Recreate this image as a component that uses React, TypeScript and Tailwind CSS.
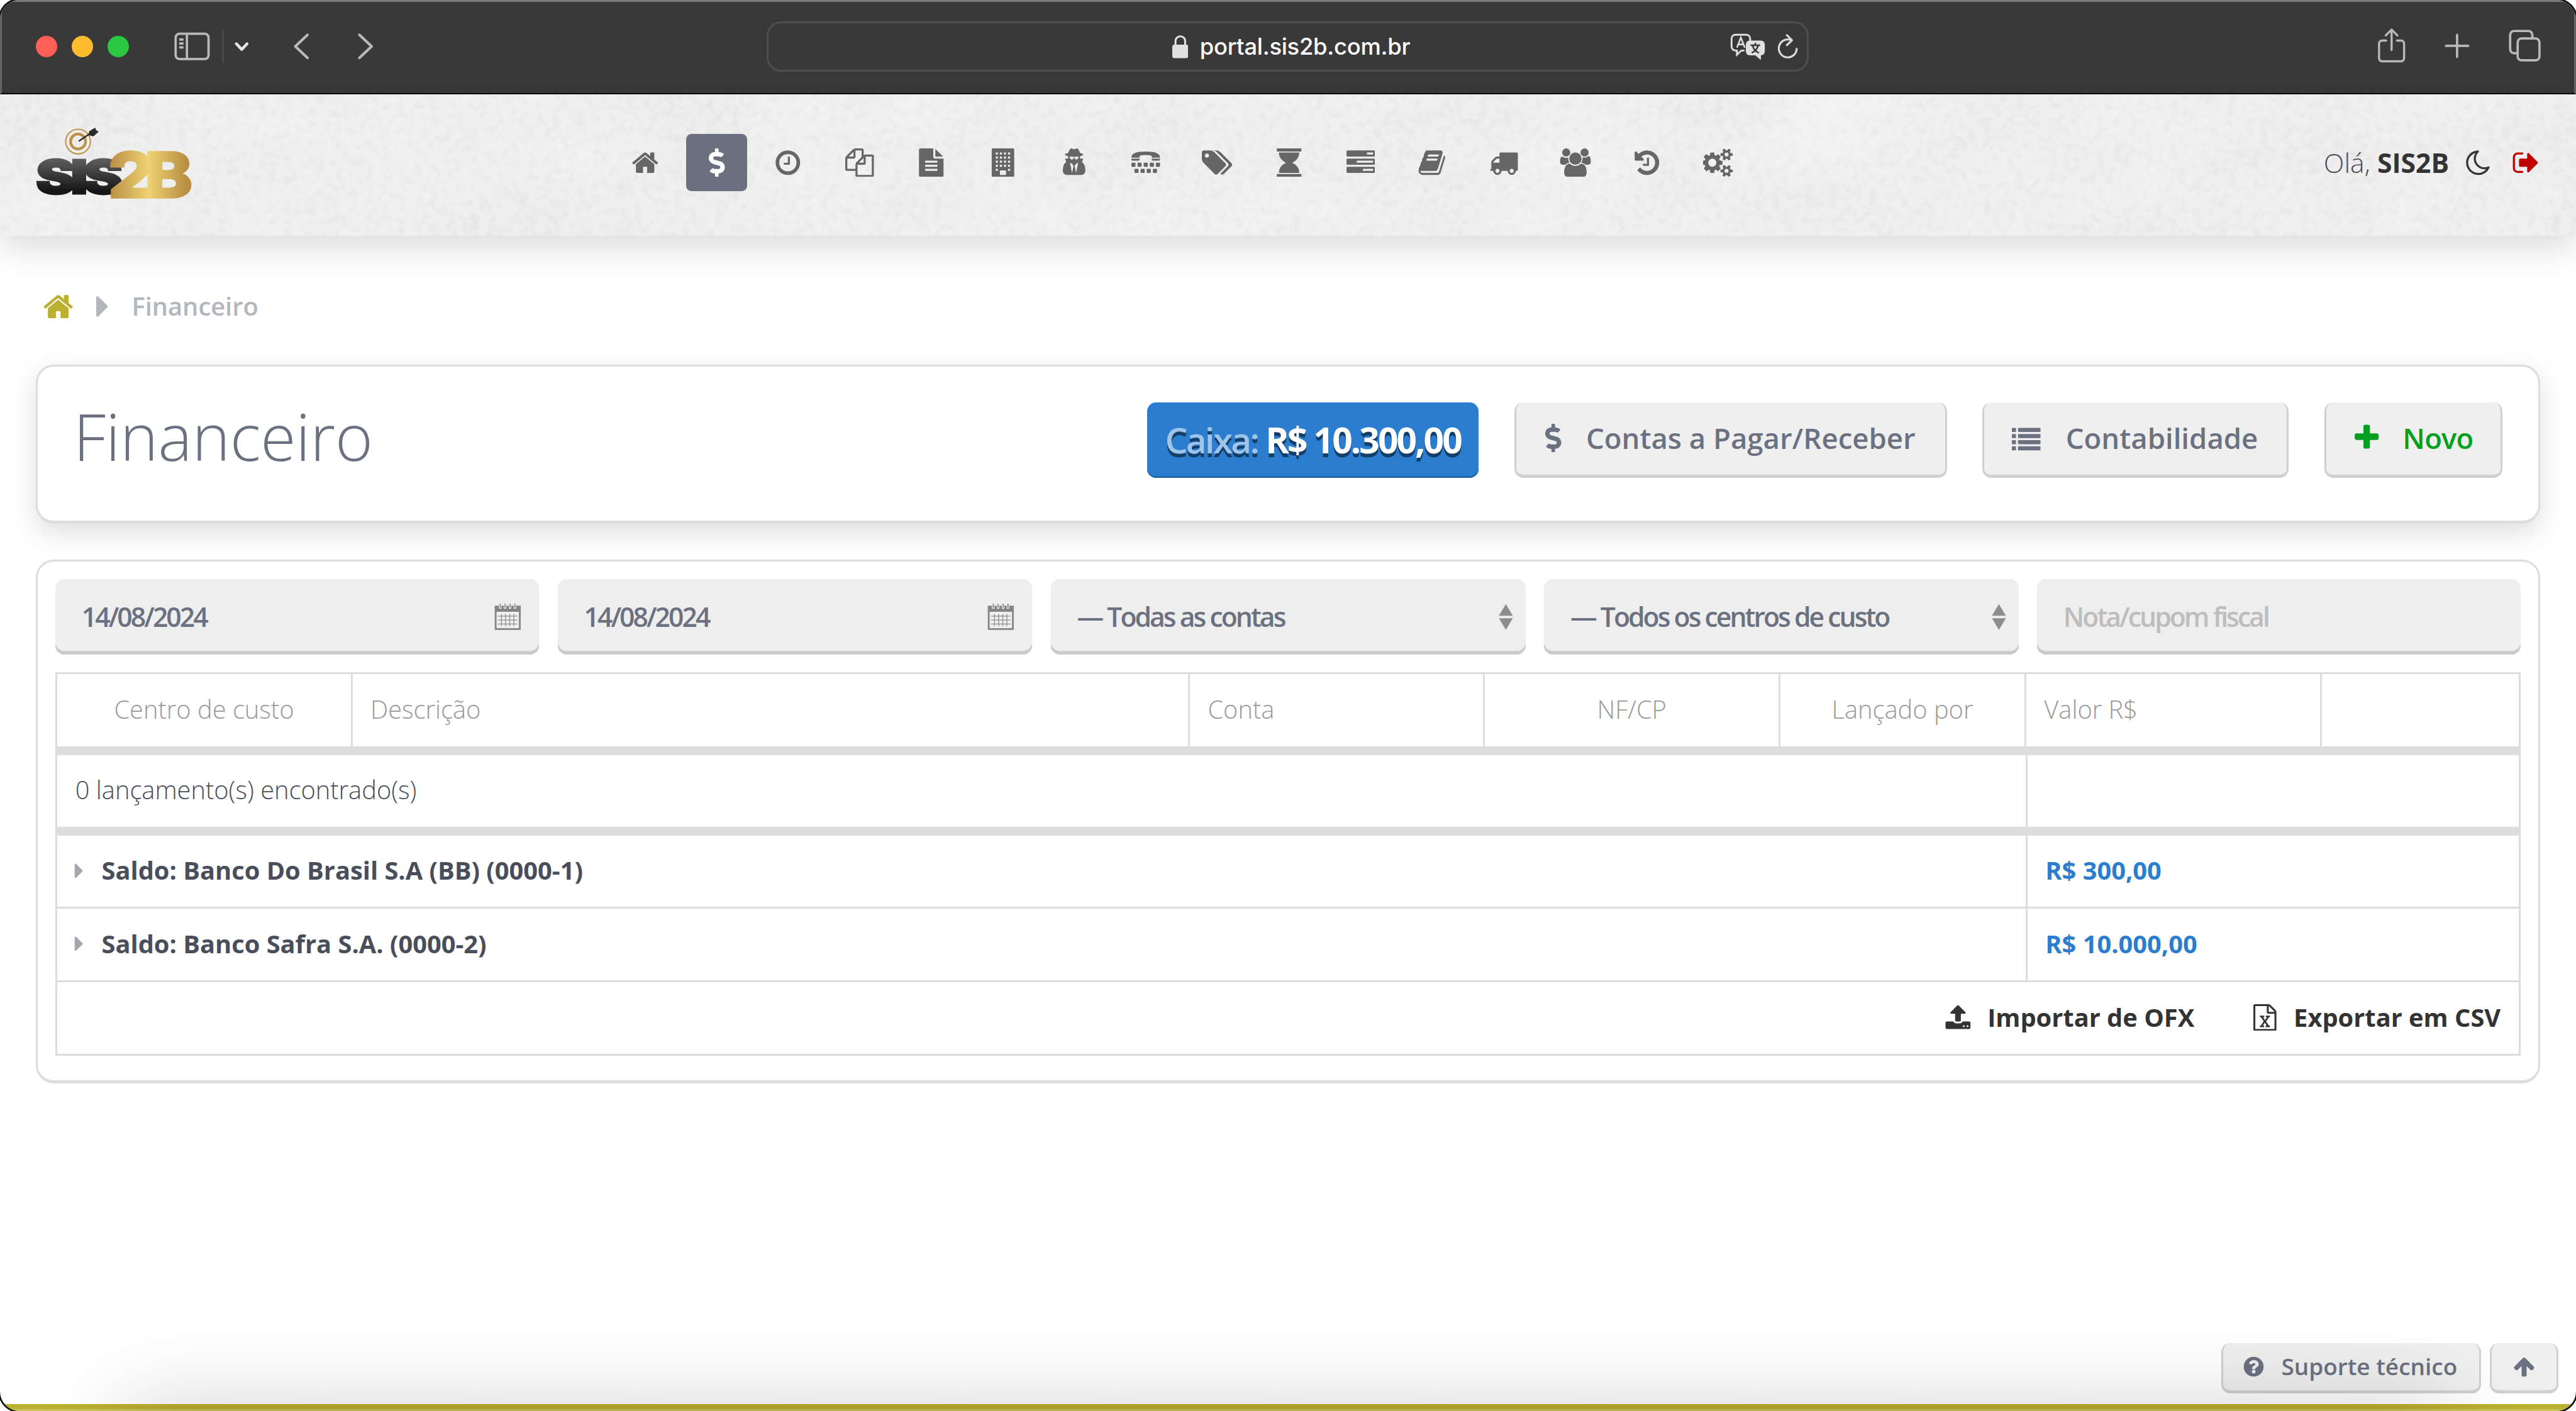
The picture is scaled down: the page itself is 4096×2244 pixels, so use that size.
import { useState, type ReactNode } from "react";
import { FaDollarSign } from "react-icons/fa";
import clsx from "clsx";

type GlyphProps = {
  d: string;
  width?: number;
  className?: string;
};

// Icon glyphs share a 1792-unit em box, only the width varies.
function Glyph({ d, width = 1792, className }: GlyphProps) {
  return (
    <svg
      viewBox={`0 0 ${width} 1792`}
      className={clsx("shrink-0", className)}
      fill="currentColor"
      fillRule="evenodd"
      aria-hidden="true"
      style={{ height: "1em", width: `${width / 1792}em` }}
    >
      <path d={d} />
    </svg>
  );
}

const glyphs = {
  home: "M1472 992v480q0 26-19 45t-45 19h-384v-384h-256v384h-384q-26 0-45-19t-19-45v-480q0-1 .5-3t.5-3l575-474 575 474q1 2 1 6zm223-69l-62 74q-8 9-21 11h-3q-13 0-21-7l-692-577-692 577q-12 8-24 7-13-2-21-11l-62-74q-8-10-7-23.5t11-21.5l719-599q32-26 76-26t76 26l244 204v-195q0-14 9-23t23-9h192q14 0 23 9t9 23v408l219 182q10 8 11 21.5t-7 23.5z",
  clock:
    "M1024 544v448q0 14-9 23t-23 9h-320q-14 0-23-9t-9-23v-64q0-14 9-23t23-9h224v-352q0-14 9-23t23-9h64q14 0 23 9t9 23zm416 352q0-148-73-273t-198-198-273-73-273 73-198 198-73 273 73 273 198 198 273 73 273-73 198-198 73-273zm224 0q0 209-103 385.5t-279.5 279.5-385.5 103-385.5-103-279.5-279.5-103-385.5 103-385.5 279.5-279.5 385.5-103 385.5 103 279.5 279.5 103 385.5z",
  files:
    "M1696 384q40 0 68 28t28 68v1216q0 40-28 68t-68 28h-960q-40 0-68-28t-28-68v-288h-544q-40 0-68-28t-28-68v-672q0-40 20-88t48-76l408-408q28-28 76-48t88-20h416q40 0 68 28t28 68v328q68-40 128-40h416zm-544 213l-299 299h299v-299zm-640-384l-299 299h299v-299zm196 647l316-316v-416h-384v416q0 40-28 68t-68 28h-416v640h512v-256q0-40 20-88t48-76zm956 804v-1152h-384v416q0 40-28 68t-68 28h-416v640h896z",
  fileText:
    "M1596 476q14 14 28 36h-472v-472q22 14 36 28zm-476 164h544v1056q0 40-28 68t-68 28h-1344q-40 0-68-28t-28-68v-1600q0-40 28-68t68-28h800v544q0 40 28 68t68 28zm160 736v-64q0-14-9-23t-23-9h-704q-14 0-23 9t-9 23v64q0 14 9 23t23 9h704q14 0 23-9t9-23zm0-256v-64q0-14-9-23t-23-9h-704q-14 0-23 9t-9 23v64q0 14 9 23t23 9h704q14 0 23-9t9-23zm0-256v-64q0-14-9-23t-23-9h-704q-14 0-23 9t-9 23v64q0 14 9 23t23 9h704q14 0 23-9t9-23z",
  building:
    "M256 0h1280q64 0 64 64v1664q0 64-64 64h-1280q-64 0-64-64v-1664q0-64 64-64zM448 256v128h128v-128zm256 0v128h128v-128zm256 0v128h128v-128zm256 0v128h128v-128zM448 512v128h128v-128zm256 0v128h128v-128zm256 0v128h128v-128zm256 0v128h128v-128zM448 768v128h128v-128zm256 0v128h128v-128zm256 0v128h128v-128zm256 0v128h128v-128zM448 1024v128h128v-128zm256 0v128h128v-128zm256 0v128h128v-128zm256 0v128h128v-128zM448 1280v128h128v-128zm768 0v128h128v-128zM736 1376q-32 0-32 32v256h384v-256q0-32-32-32z",
  userSecret:
    "M576 1536l96-448-96-128-128-64zm256 0l128-640-128 64-96 128zm160-1010q-2-4-4-6-10-8-96-8-70 0-167 19-7 2-21 2t-21-2q-97-19-167-19-86 0-96 8-2 2-4 6 2 18 4 27 2 3 7.5 6.5t7.5 10.5q2 4 7.5 20.5t7 20.5 7.5 17 8.5 17 9 14 12 13.5 14 9.5 17.500 8 20.500 4 24.500 2q36 0 59-12.500t32.500-30 14.500-34.500 11.500-29.500 17.500-12.500h12q11 0 17.500 12.500t11.500 29.500 14.500 34.500 32.500 30 59 12.500q13 0 24.500-2t20.500-4 17.500-8 14-9.500 12-13.500 9-14 8.500-17 7.500-17 7-20.500 7.500-20.500q2-7 7.500-10.500t7.500-6.500q2-9 4-27zm416 879q0 121-73 190t-194 69h-874q-121 0-194-69t-73-190q0-61 4.500-118t19-125.500 37.500-123.500 63.500-103.500 93.500-74.500l-90-220h214q-22-64-22-128 0-12 2-32-194-40-194-96 0-57 210-99 17-62 51.500-134t70.500-114q32-37 76-37 30 0 84 31t84 31 84-31 84-31q44 0 76 37 36 42 70.500 114t51.500 134q210 42 210 99 0 56-194 96 7 81-20 160h214l-82 225q63 33 107.500 96.500t65.500 143.500 29 151.500 8 148.500z",
  tty: "M0 544q0-140 220-256 220-96 676-96t676 96q220 116 220 256v32h-512v-64q0-60-70-70-130-26-314-26t-314 26q-70 10-70 70v64h-512zM0 640h512v70q0 58-58 58h-396q-58 0-58-58zm1280 0h512v70q0 58-58 58h-396q-58 0-58-58zM40 896h176q40 0 40 40v176q0 40-40 40h-176q-40 0-40-40v-176q0-40 40-40zm384 0h176q40 0 40 40v176q0 40-40 40h-176q-40 0-40-40v-176q0-40 40-40zm384 0h176q40 0 40 40v176q0 40-40 40h-176q-40 0-40-40v-176q0-40 40-40zm384 0h176q40 0 40 40v176q0 40-40 40h-176q-40 0-40-40v-176q0-40 40-40zm384 0h176q40 0 40 40v176q0 40-40 40h-176q-40 0-40-40v-176q0-40 40-40zM232 1280h176q40 0 40 40v176q0 40-40 40h-176q-40 0-40-40v-176q0-40 40-40zm384 0h176q40 0 40 40v176q0 40-40 40h-176q-40 0-40-40v-176q0-40 40-40zm384 0h176q40 0 40 40v176q0 40-40 40h-176q-40 0-40-40v-176q0-40 40-40zm384 0h176q40 0 40 40v176q0 40-40 40h-176q-40 0-40-40v-176q0-40 40-40z",
  tags: "M448 448q0-53-37.5-90.5t-90.5-37.5-90.5 37.5-37.5 90.5 37.5 90.5 90.5 37.5 90.5-37.5 37.5-90.5zm1067 576q0 53-37 90l-491 492q-39 37-91 37-53 0-90-37l-715-716q-38-37-64.5-101t-26.5-117v-416q0-52 38-90t90-38h416q53 0 117 26.5t102 64.5l715 714q37 39 37 91zm384 0q0 53-37 90l-491 492q-39 37-91 37-36 0-59-14t-53-45l470-470q37-37 37-90 0-52-37-91l-715-714q-38-38-102-64.5t-117-26.5h224q53 0 117 26.5t102 64.5l715 714q37 39 37 91z",
  hourglass:
    "M160 0h1472q32 0 32 32v160h-1536v-160q0-32 32-32zM256 256h1280q0 420-440 640 440 220 440 640h-1280q0-420 440-640-440-220-440-640zM128 1600h1536v160q0 32-32 32h-1472q-32 0-32-32z",
  tasks:
    "M1024 1408h640v-128h-640v128zm-384-512h1024v-128h-1024v128zm640-512h384v-128h-384v128zm512 832v256q0 26-19 45t-45 19h-1664q-26 0-45-19t-19-45v-256q0-26 19-45t45-19h1664q26 0 45 19t19 45zm0-512v256q0 26-19 45t-45 19h-1664q-26 0-45-19t-19-45v-256q0-26 19-45t45-19h1664q26 0 45 19t19 45zm0-512v256q0 26-19 45t-45 19h-1664q-26 0-45-19t-19-45v-256q0-26 19-45t45-19h1664q26 0 45 19t19 45z",
  book: "M1703 478q40 57 18 129l-275 906q-19 64-76.5 107.5t-122.5 43.5h-923q-77 0-148.5-53.5t-99.5-131.5q-24-67-2-127 0-4 3-27t4-37q1-8-3-21.5t-3-19.5q2-11 8-21t16.5-23.5 16.5-23.5q23-38 45-91.5t30-91.5q3-10 .5-30t-.5-28q3-11 17-28t17-23q21-36 42-92t25-90q1-9-2.5-32t.5-28q4-13 22-30.5t22-22.5q19-26 42.5-84.5t27.5-96.5q1-8-3-25.5t-2-26.5q2-8 9-18t18-23 17-21q8-12 16.5-30.5t15-35 16-36 19.5-32 26.5-23.5 36-11.5 47.5 5.5l-1 3q38-9 51-9h761q74 0 114 56t18 130l-274 906q-36 119-71.5 153.5t-128.5 34.5h-869q-27 0-38 15-11 16-1 43 24 70 144 70h923q29 0 56-15.5t35-41.5l300-987q7-22 5-57 38 15 59 43zm-1064 2q-4 13 2 22.5t20 9.5h608q13 0 25.5-9.5t16.5-22.5l21-64q4-13-2-22.5t-20-9.5h-608q-13 0-25.5 9.5t-16.5 22.5zm-83 256q-4 13 2 22.5t20 9.5h608q13 0 25.5-9.5t16.5-22.5l21-64q4-13-2-22.5t-20-9.5h-608q-13 0-25.5 9.5t-16.5 22.5z",
  truck:
    "M640 1408q0-52-38-90t-90-38-90 38-38 90 38 90 90 38 90-38 38-90zm-384-512h384v-256h-158q-13 0-22 9l-195 195q-9 9-9 22v30zm1280 512q0-52-38-90t-90-38-90 38-38 90 38 90 90 38 90-38 38-90zm256-1088v1024q0 15-4 26.5t-13.5 18.5-16.5 11.5-23.5 6-22.5 2-25.5 0-22.5-.5q0 106-75 181t-181 75-181-75-75-181h-384q0 106-75 181t-181 75-181-75-75-181h-64q-3 0-22.5.5t-25.5 0-22.5-2-23.5-6-16.5-11.5-13.5-18.5-4-26.5q0-26 19-45t45-19v-320q0-8-.5-35t0-38 2.5-34.5 6.5-37 14-30.5 22.5-30l198-198q19-19 50.5-32t58.5-13h160v-192q0-26 19-45t45-19h1024q26 0 45 19t19 45z",
  users:
    "M657 896q-162 5-265 128h-134q-82 0-138-40.5t-56-118.5q0-353 124-353 6 0 43.5 21t97.5 42.5 119 21.5q67 0 133-23-5 37-5 66 0 159 81 282zm1071 637q0 120-73 189.5t-194 69.5h-874q-121 0-194-69.5t-73-189.5q0-53 3.5-103.5t14-109 26.5-108.5 43-97.5 62-81 85.5-53.5 111.5-20q10 0 43 21.5t73 48 107 48 135 21.5 135-21.5 107-48 73-48 43-21.5q61 0 111.5 20t85.5 53.5 62 81 43 97.5 26.5 108.5 14 109 3.5 103.5zm-1024-1277q0 106-75 181t-181 75-181-75-75-181 75-181 181-75 181 75 75 181zm704 384q0 159-112.5 271.5t-271.5 112.5-271.5-112.5-112.5-271.5 112.5-271.5 271.5-112.5 271.5 112.5 112.5 271.5zm576 225q0 78-56 118.5t-138 40.5h-134q-103-123-265-128 81-123 81-282 0-29-5-66 66 23 133 23 59 0 119-21.5t97.5-42.5 43.5-21q124 0 124 353zm-128-609q0 106-75 181t-181 75-181-75-75-181 75-181 181-75 181 75 75 181z",
  history:
    "M1664 896q0 156-61 298t-164 245-245 164-298 61q-172 0-327-72.5t-264-204.5q-7-10-6.5-22.5t8.5-20.5l137-138q10-9 25-9 16 2 23 12 73 95 179 147t225 52q104 0 198.5-40.5t163.5-109.5 109.5-163.5 40.5-198.5-40.5-198.5-109.5-163.5-163.5-109.5-198.5-40.5q-98 0-188 35.5t-160 101.5l137 138q31 30 14 69-17 40-59 40h-448q-26 0-45-19t-19-45v-448q0-42 40-59 39-17 69 14l130 129q107-101 244.5-156.5t284.5-55.5q156 0 298 61t245 164 164 245 61 298zm-640-288v448q0 14-9 23t-23 9h-320q-14 0-23-9t-9-23v-64q0-14 9-23t23-9h224v-352q0-14 9-23t23-9h64q14 0 23 9t9 23z",
  cogs: "M832 896q0-106-75-181t-181-75-181 75-75 181 75 181 181 75 181-75 75-181zm768 512q0-52-38-90t-90-38-90 38-38 90q0 53 37.5 90.5t90.5 37.5 90.5-37.5 37.5-90.5zm0-1024q0-52-38-90t-90-38-90 38-38 90q0 53 37.5 90.5t90.5 37.5 90.5-37.5 37.5-90.5zm-384 421v185q0 10-7 19.5t-16 10.5l-155 24q-11 35-32 76 34 48 90 115 7 11 7 20 0 12-7 19-23 30-82.5 89.5t-78.5 59.5q-11 0-21-7l-115-90q-37 19-77 31-11 108-23 155-7 24-30 24h-186q-11 0-20-7.5t-10-17.5l-23-153q-34-10-75-31l-118 89q-7 7-20 7-11 0-21-8-144-133-144-160 0-9 7-19 10-14 41-53t47-61q-23-44-35-82l-152-24q-10-1-17-9.5t-7-19.5v-185q0-10 7-19.5t16-10.5l155-24q11-35 32-76-34-48-90-115-7-11-7-20 0-12 7-20 22-30 82-89t79-59q11 0 21 7l115 90q34-18 77-32 11-108 23-154 7-24 30-24h186q11 0 20 7.5t10 17.5l23 153q34 10 75 31l118-89q8-7 20-7 11 0 21 8 144 133 144 160 0 8-7 19-12 16-42 54t-45 60q23 48 34 82l152 23q10 2 17 10.5t7 19.5zm640 533v140q0 16-149 31-12 27-30 52 51 113 51 138 0 4-4 7-122 71-124 71-8 0-46-47t-52-68q-20 2-30 2t-30-2q-14 21-52 68t-46 47q-2 0-124-71-4-3-4-7 0-25 51-138-18-25-30-52-149-15-149-31v-140q0-16 149-31 13-29 30-52-51-113-51-138 0-4 4-7 4-2 35-20t59-34 30-16q8 0 46 46.5t52 67.5q20-2 30-2t30 2q51-71 92-112l6-2q4 0 124 70 4 3 4 7 0 25-51 138 17 23 30 52 149 15 149 31zm0-1024v140q0 16-149 31-12 27-30 52 51 113 51 138 0 4-4 7-122 71-124 71-8 0-46-47t-52-68q-20 2-30 2t-30-2q-14 21-52 68t-46 47q-2 0-124-71-4-3-4-7 0-25 51-138-18-25-30-52-149-15-149-31v-140q0-16 149-31 13-29 30-52-51-113-51-138 0-4 4-7 4-2 35-20t59-34 30-16q8 0 46 46.5t52 67.5q20-2 30-2t30 2q51-71 92-112l6-2q4 0 124 70 4 3 4 7 0 25-51 138 17 23 30 52 149 15 149 31z",
  moon: "M1390 1303q-54 9-110 9-182 0-337-90t-245-245-90-337q0-192 104-357-201 60-328.5 229t-127.5 384q0 130 51 248.5t136.5 204 204 136.5 248.5 51q144 0 273.5-61.5t220.5-171.5zm203-85q-94 203-283.5 324.5t-413.5 121.5q-156 0-298-61t-245-164-164-245-61-298q0-153 57.5-292.5t156-241.5 235.5-164.5 290-68.5q44-2 61 39 18 41-15 72-86 78-131.5 181.5t-45.5 218.5q0 148 73 273t198 198 273 73q118 0 228-51 41-18 72 13 14 14 17.5 34t-4.5 38z",
  signOut:
    "M704 1440q0 4 1 20t.5 26.5-3 23.5-10 19.5-20.5 6.5h-320q-119 0-203.5-84.5t-84.5-203.5v-704q0-119 84.5-203.5t203.5-84.5h320q13 0 22.5 9.5t9.5 22.5q0 4 1 20t.5 26.5-3 23.5-10 19.5-20.5 6.5h-320q-66 0-113 47t-47 113v704q0 66 47 113t113 47h312l11.5 1 11.5 3 8 5.5 7 9 2 13.5zm928-544q0 26-19 45l-544 544q-19 19-45 19t-45-19-19-45v-288h-448q-26 0-45-19t-19-45v-384q0-26 19-45t45-19h448v-288q0-26 19-45t45-19 45 19l544 544q19 19 19 45z",
  list: "M32 256h192q32 0 32 32v192q0 32-32 32h-192q-32 0-32-32v-192q0-32 32-32zm0 384h192q32 0 32 32v192q0 32-32 32h-192q-32 0-32-32v-192q0-32 32-32zm0 384h192q32 0 32 32v192q0 32-32 32h-192q-32 0-32-32v-192q0-32 32-32zm0 384h192q32 0 32 32v192q0 32-32 32h-192q-32 0-32-32v-192q0-32 32-32zM416 256h1344q32 0 32 32v192q0 32-32 32h-1344q-32 0-32-32v-192q0-32 32-32zm0 384h1344q32 0 32 32v192q0 32-32 32h-1344q-32 0-32-32v-192q0-32 32-32zm0 384h1344q32 0 32 32v192q0 32-32 32h-1344q-32 0-32-32v-192q0-32 32-32zm0 384h1344q32 0 32 32v192q0 32-32 32h-1344q-32 0-32-32v-192q0-32 32-32z",
  plus: "M1600 736v192q0 40-28 68t-68 28h-416v416q0 40-28 68t-68 28h-192q-40 0-68-28t-28-68v-416h-416q-40 0-68-28t-28-68v-192q0-40 28-68t68-28h416v-416q0-40 28-68t68-28h192q40 0 68 28t28 68v416h416q40 0 68 28t28 68z",
  caret:
    "M608 896q0 26-19 45l-448 448q-19 19-45 19t-45-19-19-45v-896q0-26 19-45t45-19 45 19l448 448q19 19 19 45z",
  upload:
    "M1344 1472q0-26-19-45t-45-19-45 19-19 45 19 45 45 19 45-19 19-45zm256 0q0-26-19-45t-45-19-45 19-19 45 19 45 45 19 45-19 19-45zm128-224v320q0 40-28 68t-68 28h-1472q-40 0-68-28t-28-68v-320q0-40 28-68t68-28h427q21 56 70.5 92t110.5 36h256q61 0 110.5-36t70.5-92h427q40 0 68 28t28 68zm-325-648q-17 40-59 40h-256v448q0 26-19 45t-45 19h-256q-26 0-45-19t-19-45v-448h-256q-42 0-59-40-17-39 14-69l448-448q18-19 45-19t45 19l448 448q31 30 14 69z",
  fileExcel:
    "M1596 380q28 28 48 76t20 88v1152q0 40-28 68t-68 28h-1344q-40 0-68-28t-28-68v-1600q0-40 28-68t68-28h896q40 0 88 20t76 48zm-444-244v376h376q-10-29-22-41l-313-313q-12-12-41-22zm384 1528v-1024h-416q-40 0-68-28t-28-68v-416h-768v1536h1280zm-979-234v106h281v-106h-75l103-161q5-7 10-16.5t7.5-13.5 3.5-4h2q1 4 5 10 2 4 4.5 7.5t6 8 6.5 8.5l107 161h-76v106h291v-106h-68l-192-273 195-282h67v-107h-279v107h74l-103 159q-4 7-10 16.5t-9 13.5l-2 3h-2q-1-4-5-10-6-11-17-23l-106-159h76v-107h-290v107h68l189 272-194 283h-68z",
  question:
    "M1024 1376v-192q0-14-9-23t-23-9h-192q-14 0-23 9t-9 23v192q0 14 9 23t23 9h192q14 0 23-9t9-23zm256-672q0-88-55.5-163t-138.5-116-170-41q-243 0-371 213-15 24 8 42l132 100q7 6 19 6 16 0 25-12 53-68 86-92 34-24 86-24 48 0 85.5 26t37.5 59q0 38-20 61t-68 45q-63 28-115.5 86.5t-52.5 125.5v36q0 14 9 23t23 9h192q14 0 23-9t9-23q0-19 21.5-49.5t54.5-49.5q32-18 49-28.5t46-35 44.5-48 28-60.5 12.5-81zm384 192q0 209-103 385.5t-279.5 279.5-385.5 103-385.5-103-279.5-279.5-103-385.5 103-385.5 279.5-279.5 385.5-103 385.5 103 279.5 279.5 103 385.5z",
  arrowUp:
    "M1675 971q0 51-37 90l-75 75q-38 38-91 38-54 0-90-38l-294-293v704q0 52-37.5 84.5t-90.5 32.5h-128q-53 0-90.5-32.5t-37.5-84.5v-704l-294 293q-36 38-90 38t-90-38l-75-75q-38-38-38-90 0-53 38-91l651-651q35-37 90-37 54 0 91 37l651 651q37 39 37 91z",
};

const navItems: { key: string; icon: ReactNode }[] = [
  { key: "home", icon: <Glyph d={glyphs.home} /> },
  { key: "financeiro", icon: <FaDollarSign /> },
  { key: "horarios", icon: <Glyph d={glyphs.clock} /> },
  { key: "copias", icon: <Glyph d={glyphs.files} /> },
  { key: "documentos", icon: <Glyph d={glyphs.fileText} /> },
  { key: "empresas", icon: <Glyph d={glyphs.building} /> },
  { key: "usuarios", icon: <Glyph d={glyphs.userSecret} width={1408} /> },
  { key: "atendimento", icon: <Glyph d={glyphs.tty} /> },
  { key: "produtos", icon: <Glyph d={glyphs.tags} width={1920} /> },
  { key: "pendencias", icon: <Glyph d={glyphs.hourglass} /> },
  { key: "tarefas", icon: <Glyph d={glyphs.tasks} /> },
  { key: "cadastros", icon: <Glyph d={glyphs.book} /> },
  { key: "entregas", icon: <Glyph d={glyphs.truck} /> },
  { key: "equipes", icon: <Glyph d={glyphs.users} width={2048} /> },
  { key: "historico", icon: <Glyph d={glyphs.history} /> },
  { key: "configuracoes", icon: <Glyph d={glyphs.cogs} width={1920} /> },
];

const balances = [
  { label: "Saldo: Banco Do Brasil S.A (BB) (0000-1)", value: "R$ 300,00" },
  { label: "Saldo: Banco Safra S.A. (0000-2)", value: "R$ 10.000,00" },
];

function BrowserBar() {
  return (
    <div className="flex h-[52.6px] shrink-0 items-start border-x-[1.1px] border-t-[1.1px] border-b-[0.8px] border-x-[#666] border-t-[#7b7b7b] border-b-black bg-[#393939] font-['Inter',sans-serif] text-[#b9b9b9]">
      <div className="flex h-[50px] w-[427.6px] items-center pl-[19px]">
        <div className="flex gap-2">
          <span className="size-3 rounded-full bg-[#ff5f57]" />
          <span className="size-3 rounded-full bg-[#febc2e]" />
          <span className="size-3 rounded-full bg-[#28c840]" />
        </div>
        <svg className="ml-[25.5px] h-4 w-5" viewBox="0 0 20 16" fill="none" stroke="currentColor" strokeWidth="1.3">
          <rect x=".8" y=".9" width="18.4" height="14.2" rx="2.2" />
          <path d="M7.1 1v14M2.8 4.2h2.4M2.8 6.4h2.4M2.8 8.6h2.4" />
        </svg>
        <span className="ml-[6.5px] h-[18px] w-px bg-[#4a4a4a]" />
        <svg className="ml-[6px] h-2 w-2" viewBox="0 0 8 8" fill="none" stroke="#e6e6e6" strokeWidth="1.6" strokeLinecap="round" strokeLinejoin="round">
          <path d="M1 2.3l3 3.2 3-3.2" />
        </svg>
        <svg className="ml-[24.4px] h-4 w-[10px]" viewBox="0 0 10 16" fill="none" stroke="currentColor" strokeWidth="1.5" strokeLinecap="round" strokeLinejoin="round">
          <path d="M8.4 1.6L1.6 8l6.8 6.4" />
        </svg>
        <svg className="ml-[26px] h-4 w-[10px]" viewBox="0 0 10 16" fill="none" stroke="currentColor" strokeWidth="1.5" strokeLinecap="round" strokeLinejoin="round">
          <path d="M1.6 1.6L8.4 8l-6.8 6.4" />
        </svg>
      </div>

      <div className="mt-[11px] flex h-7 w-[582.4px] items-center rounded-lg border-[1.1px] border-[#4f4f4f] pr-[5px]">
        <div className="flex flex-1 items-center pt-[0.5px] pl-[225.5px]">
          <svg className="h-[13px] w-[9px]" viewBox="0 0 9 13" aria-hidden="true">
            <rect x="0" y="5.3" width="9" height="7.5" rx="1.2" fill="#e0e0e0" />
            <path d="M1.8 5.6V3.3a2.7 2.7 0 0 1 5.4 0v2.3" fill="none" stroke="#e0e0e0" strokeWidth="1.1" />
          </svg>
          <span className="ml-[6.5px] text-[12.8px] leading-4 font-medium tracking-[-0.1px] whitespace-nowrap text-white">
            portal.sis2b.com.br
          </span>
        </div>
        <svg className="h-[15px] w-5" viewBox="0 0 20 15" aria-hidden="true">
          <path d="M3 .8h6a2.2 2.2 0 0 1 2.2 2.2v1.2M8 9.6H6.3L3.8 12V9.6H3A2.2 2.2 0 0 1 .8 7.4V3A2.2 2.2 0 0 1 3 .8" fill="none" stroke="#e0e0e0" strokeWidth="1" />
          <rect x="8.8" y="4" width="10.6" height="8.3" rx="2.2" fill="#e0e0e0" />
          <path d="M13.8 12h3.4v3z" fill="#e0e0e0" />
          <path d="M3.8 8l2.2-5.6L8.2 8M4.5 6.2h3" fill="none" stroke="#e0e0e0" strokeWidth=".9" />
          <path d="M11.4 6.7h5.4M14.1 5.4v1.3M12.6 6.9q.8 3 3.5 4M15.6 6.9q-.8 3-3.5 4" fill="none" stroke="#393939" strokeWidth=".9" />
        </svg>
        <svg className="ml-[6px] h-[15px] w-3" viewBox="0 0 12 15" fill="none" stroke="#dcdcdc" strokeWidth="1.1" strokeLinecap="round" strokeLinejoin="round">
          <path d="M8.3 3.9A5 5 0 1 0 11.2 8.6M5.7 1l2.9 2.9-2.9 2.7" />
        </svg>
      </div>

      <div className="flex h-[50px] flex-1 items-center justify-end pr-[18.5px] pb-[1px]">
        <svg className="h-[20px] w-4" viewBox="0 0 16 20" fill="none" stroke="currentColor" strokeWidth="1.2" strokeLinecap="round" strokeLinejoin="round">
          <path d="M5 7.2H2.7A1.7 1.7 0 0 0 1 8.9v8.2a1.7 1.7 0 0 0 1.7 1.7h10.6a1.7 1.7 0 0 0 1.7-1.7V8.9a1.7 1.7 0 0 0-1.7-1.7H11M8 12.5V1.2M4.8 4.3L8 1.1l3.2 3.2" />
        </svg>
        <svg className="ml-[21.5px] h-[14px] w-[14px]" viewBox="0 0 14 14" stroke="currentColor" strokeWidth="1.3" strokeLinecap="round">
          <path d="M7 .8v12.4M.8 7h12.4" />
        </svg>
        <svg className="ml-[22px] h-[18px] w-[18px]" viewBox="0 0 18 18" fill="none" stroke="currentColor" strokeWidth="1.3">
          <rect x="5" y="5" width="12.2" height="12.2" rx="2.2" />
          <path d="M4.8 13.2H3A2.2 2.2 0 0 1 .8 11V3A2.2 2.2 0 0 1 3 .8h8A2.2 2.2 0 0 1 13.2 3v1.8" />
        </svg>
      </div>
    </div>
  );
}

function Logo() {
  return (
    <svg className="h-[56px] w-[88px] overflow-visible" viewBox="20 62 88 56" role="img" aria-label="SIS2B">
      <defs>
        <linearGradient id="logo-dark" x1="0" y1="0" x2="0" y2="1">
          <stop offset="0.2" stopColor="#5c5c5c" />
          <stop offset="0.75" stopColor="#161616" />
        </linearGradient>
        <linearGradient id="logo-gold" gradientUnits="userSpaceOnUse" x1="62" x2="106" y1="0" y2="0">
          <stop offset="0" stopColor="#bb9145" />
          <stop offset="0.48" stopColor="#eed272" />
          <stop offset="0.95" stopColor="#b98f43" />
        </linearGradient>
      </defs>
      <text x="20" y="107.4" textLength="46" lengthAdjust="spacingAndGlyphs" fill="url(#logo-dark)" stroke="url(#logo-dark)" strokeWidth="1" className="font-['Inter',sans-serif] text-[26px] font-black tracking-[-2px]">
        SIS
      </text>
      <text x="60.4" y="109.4" textLength="42" lengthAdjust="spacingAndGlyphs" fill="url(#logo-gold)" stroke="url(#logo-gold)" strokeWidth="1.2" className="font-['Inter',sans-serif] text-[35px] font-extrabold tracking-[-4.5px]">
        2B
      </text>
      <g fill="none" stroke="#bb9145">
        <circle cx="43.6" cy="78.2" r="6.9" strokeWidth=".7" />
        <circle cx="43.6" cy="78.2" r="4.2" strokeWidth="1.5" />
      </g>
      <path d="M44 78l6.5-4.4" stroke="#2b2b2b" strokeWidth=".9" />
      <path d="M49.3 74.6l.6-2.2 3.3-2 .4 1.4 1.5.9-3 2.7z" fill="#2b2b2b" />
    </svg>
  );
}

function Header() {
  return (
    <header className="relative z-10 flex h-[79.4px] shrink-0 items-center bg-[#eee] shadow-[0_6px_18px_rgba(0,0,0,0.15)]">
      {/* faint plaster texture */}
      <svg className="absolute inset-0 h-full w-full" aria-hidden="true">
        <filter id="plaster-fine" x="0" y="0" width="100%" height="100%">
          <feTurbulence type="fractalNoise" baseFrequency="0.22" numOctaves="4" seed="4" />
          <feColorMatrix values="0 0 0 0 0.45  0 0 0 0 0.45  0 0 0 0 0.45  0.9 0.5 0 0 -0.62" />
        </filter>
        <filter id="plaster-soft" x="0" y="0" width="100%" height="100%">
          <feTurbulence type="fractalNoise" baseFrequency="0.012 0.02" numOctaves="4" seed="9" />
          <feColorMatrix values="0 0 0 0 1  0 0 0 0 1  0 0 0 0 1  1.2 0.6 0 0 -0.6" />
        </filter>
        <rect width="100%" height="100%" filter="url(#plaster-fine)" opacity="0.33" />
        <rect width="100%" height="100%" filter="url(#plaster-soft)" opacity="0.4" />
      </svg>

      <div className="relative flex w-full items-center pb-[3px]">
        <div className="w-[343.6px] pl-5">
          <Logo />
        </div>
        <nav className="flex gap-[6px] text-base text-[#666]">
          {navItems.map((item) => (
            <a
              key={item.key}
              href="#"
              className={clsx(
                "flex h-8 w-[34px] items-center justify-center rounded-[3px]",
                item.key === "financeiro" && "bg-[#6b707e] text-white",
              )}
            >
              {item.icon}
            </a>
          ))}
        </nav>
        <div className="ml-auto flex items-center pr-5 text-base text-[#333]">
          <span className="text-[15px] leading-5 font-light whitespace-nowrap text-[#4a4d58]">
            Olá, <b className="font-bold text-[#333]">SIS2B</b>
          </span>
          <Glyph d={glyphs.moon} className="ml-[8.5px]" />
          <Glyph d={glyphs.signOut} className="ml-[10.5px] text-[#c00000]" />
        </div>
      </div>
    </header>
  );
}

type ActionButtonProps = {
  icon: ReactNode;
  label: string;
  className: string;
};

function ActionButton({ icon, label, className }: ActionButtonProps) {
  return (
    <button
      type="button"
      className={clsx(
        "flex h-[42.3px] shrink-0 items-center rounded-[5px] border-x-[1.1px] border-b-2 border-[#d0d0d0] bg-[#efefef] pb-[1px] text-base font-semibold whitespace-nowrap",
        className,
      )}
    >
      {icon}
      <span>{label}</span>
    </button>
  );
}

function CalendarIcon() {
  return (
    <svg className="h-[15px] w-[15px] shrink-0" viewBox="0 0 15 15" aria-hidden="true">
      <rect x=".75" y="1.7" width="13.5" height="12.5" fill="#f0f0f0" stroke="#858585" />
      <path d="M.3 1.2h14.4v3.4H.3z" fill="#858585" />
      <path d="M3.3 0v2.8M6 0v2.8M8.8 0v2.8M11.5 0v2.8" stroke="#eee" strokeWidth="1.4" />
      <path d="M3.3 0v2.4M6 0v2.4M8.8 0v2.4M11.5 0v2.4" stroke="#858585" strokeWidth=".6" />
      <path d="M2 7h11M2 9.2h11M2 11.4h11M4 5.7v6.9M6.3 5.7v6.9M8.6 5.7v6.9M10.9 5.7v6.9" stroke="#8d8d8d" strokeWidth=".45" />
    </svg>
  );
}

function SortIcon() {
  return (
    <svg className="h-[15px] w-2 shrink-0" viewBox="0 0 8 15" fill="#8d8d8d" aria-hidden="true">
      <path d="M4 .3l3.9 6.5H.1zM4 14.7L7.9 8.2H.1z" />
    </svg>
  );
}

type FieldProps = {
  children: ReactNode;
  icon?: ReactNode;
  className: string;
};

function Field({ children, icon, className }: FieldProps) {
  return (
    <div
      className={clsx(
        "flex h-[42px] items-center justify-between rounded-[5px] bg-[#eee] pl-[14.6px] text-[15px] leading-5 font-semibold tracking-[-1.04px] whitespace-nowrap shadow-[inset_0_-2px_0_#cacaca]",
        className,
      )}
    >
      <span>{children}</span>
      {icon}
    </div>
  );
}

function EntriesTable() {
  const columns = "grid-cols-[164.2fr_468.8fr_165.3fr_165.4fr_137.6fr_165.5fr_111.2fr]";
  const split = "grid-cols-[1102fr_276fr]";

  return (
    <div className="mt-[10px] border-[1.1px] border-[#ddd] text-sm font-light">
      <div className={clsx("grid h-[45.2px] border-b-[5px] border-[#ddd] text-[#999]", columns)}>
        <span className="flex items-center justify-center pb-[0.5px]">Centro de custo</span>
        <span className="flex items-center border-l-[1.1px] border-[#ddd] pb-[0.5px] pl-[10px]">Descrição</span>
        <span className="flex items-center border-l-[1.1px] border-[#ddd] pb-[0.5px] pl-[10px]">Conta</span>
        <span className="flex items-center justify-center border-l-[1.1px] border-[#ddd] pb-[0.5px]">NF/CP</span>
        <span className="flex items-center justify-center border-l-[1.1px] border-[#ddd] pb-[0.5px]">Lançado por</span>
        <span className="flex items-center border-l-[1.1px] border-[#ddd] pb-[0.5px] pl-[10px]">Valor R$</span>
        <span className="border-l-[1.1px] border-[#ddd]" />
      </div>
      <div className={clsx("grid h-[45px] border-b-[5px] border-[#ddd] text-[#4a4d58]", split)}>
        <span className="flex items-center pb-[0.5px] pl-[10px]">0 lançamento(s) encontrado(s)</span>
        <span className="border-l-[1.1px] border-[#ddd]" />
      </div>
      {balances.map((row) => (
        <div
          key={row.label}
          className={clsx("grid h-[41px] border-b-[1.1px] border-[#ddd] font-bold text-[#4a4e5a]", split)}
        >
          <span className="flex items-center pb-[0.5px] pl-[9.5px]">
            <Glyph d={glyphs.caret} width={640} className="mr-[10.2px] text-[#a5a7ae]" />
            {row.label}
          </span>
          <span className="flex items-center border-l-[1.1px] border-[#ddd] pb-[0.5px] pl-[10px] text-[#2a7dcf]">
            {row.value}
          </span>
        </div>
      ))}
      <div className="flex h-10 items-center justify-end pr-[10px] pb-[0.5px] font-bold text-[#333]">
        <Glyph d={glyphs.upload} className="mr-[9px] text-[15px]" />
        <span>Importar de OFX</span>
        <Glyph d={glyphs.fileExcel} className="mr-[8.5px] ml-[32px] text-[15px]" />
        <span>Exportar em CSV</span>
      </div>
    </div>
  );
}

export default function App() {
  const [dates] = useState({ from: "14/08/2024", to: "14/08/2024" });

  return (
    <div className="h-[2244px] w-[4096px] overflow-hidden bg-white">
      <div className="relative flex h-[788.9px] w-[1440px] flex-col overflow-hidden rounded-[11px] bg-white font-['Open_Sans',sans-serif] text-[#6b7180] shadow-[0_0_0_1px_#111] [zoom:2.844444]">
        <BrowserBar />
        <Header />

        <main className="flex-1 px-5">
          <div className="flex h-[72px] items-center pt-[7px] pl-[3.5px]">
            <Glyph d={glyphs.home} className="text-[18px] text-[#bbb02f]" />
            <Glyph d={glyphs.caret} width={640} className="ml-[12px] text-[20px] text-[#b3b6bd]" />
            <span className="ml-[13px] text-sm font-semibold text-[#b3b6bd]">Financeiro</span>
          </div>

          <section className="flex h-[88.8px] rounded-[10px] border-[1.1px] border-b-2 border-[#ddd] bg-white pr-5 pl-[20px] shadow-[0_5px_15px_rgba(0,0,0,0.13)]">
            <h1 className="mt-[14px] text-4xl leading-[50px] font-light tracking-[-0.05px]">Financeiro</h1>
            <div className="mt-5 ml-auto flex gap-5">
              <div className="flex h-[42.3px] w-[185.4px] items-center justify-center rounded-[5px] bg-[#2a7dcf] text-xl font-bold tracking-[-1px] whitespace-nowrap text-white shadow-[inset_0_-1px_0_#2263a5] [text-shadow:0_2px_0_rgba(0,0,0,0.5)]">
                <span>
                  <span className="font-semibold text-[#9fc4ea]">Caixa:</span> R$ 10.300,00
                </span>
              </div>
              <ActionButton
                className="w-[241.6px] pl-[13.4px]"
                icon={<FaDollarSign className="mr-[10.5px] ml-[-1px]" />}
                label="Contas a Pagar/Receber"
              />
              <ActionButton
                className="w-[171.2px] pl-[15.5px]"
                icon={<Glyph d={glyphs.list} className="mr-[14px]" />}
                label="Contabilidade"
              />
              <ActionButton
                className="w-[99.5px] pl-[14px] tracking-[-0.3px] text-[#05a022]"
                icon={<Glyph d={glyphs.plus} className="mr-[11.6px] text-[17px]" />}
                label="Novo"
              />
            </div>
          </section>

          <section className="mt-5 h-[292.8px] rounded-[10px] border-[1.1px] border-b-2 border-[#ddd] bg-white px-[10px] pt-[10px]">
            <div className="flex gap-[10.4px]">
              <Field className="w-[270.4px] pr-[10px]" icon={<CalendarIcon />}>
                {dates.from}
              </Field>
              <Field className="w-[265.2px] pr-[10px]" icon={<CalendarIcon />}>
                {dates.to}
              </Field>
              <Field className="w-[265.4px] pr-[7px]" icon={<SortIcon />}>
                — Todas as contas
              </Field>
              <Field className="w-[265.2px] pr-[7px]" icon={<SortIcon />}>
                — Todos os centros de custo
              </Field>
              <Field className="flex-1 text-[#bdbdbd]">Nota/cupom fiscal</Field>
            </div>
            <EntriesTable />
          </section>
        </main>

        {/* floating support buttons */}
        <div className="absolute right-[10px] bottom-[10px] flex gap-[5px]">
          <button
            type="button"
            className="flex h-[28px] w-[145.4px] items-center rounded-[5px] border-x-[1.1px] border-b-2 border-[#d0d0d0] bg-[#efefef] pl-[10.6px] text-[13px] leading-5 font-semibold whitespace-nowrap"
          >
            <Glyph d={glyphs.question} className="mr-[9px] text-[13px]" />
            Suporte técnico
          </button>
          <button
            type="button"
            className="flex h-[28px] w-[38px] items-center justify-center rounded-[5px] border-x-[1.1px] border-b-2 border-[#d0d0d0] bg-[#efefef]"
          >
            <Glyph d={glyphs.arrowUp} className="text-[13px]" />
          </button>
        </div>

        <footer className="h-1 shrink-0 border-b-[1.1px] border-[#cbc25f] bg-[#bbb02f]" />
        <div className="pointer-events-none absolute top-full right-[70px] left-[70px] h-20 shadow-[0_0_50px_rgba(0,0,0,0.2)]" />
      </div>
    </div>
  );
}
